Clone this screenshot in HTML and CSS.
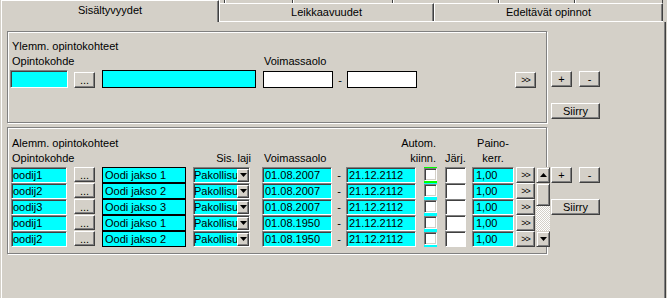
FILE: index.html
```html
<!DOCTYPE html>
<html lang="fi">
<head>
    <meta charset="UTF-8">
    <title>Sisältyvyydet</title>
    <link rel="stylesheet" href="styles.css">
</head>
<body>
    <div class="window">
        <div class="tabbar">
            <div class="tab tab-active">Sisältyvyydet</div>
            <div class="tab-rest">
                <div class="tab-back">
                    <span class="seg seg-a"></span>
                    <span class="seg seg-b"></span>
                    <span class="seg seg-c"></span>
                    <span class="seg seg-d"></span>
                    <span class="seg seg-e"></span>
                    <span class="seg seg-f"></span>
                </div>
                <div class="tab-front">
                    <div class="tab tab-leik">Leikkaavuudet</div>
                    <div class="tab tab-edel">Edeltävät opinnot</div>
                </div>
            </div>
        </div>

        <div class="panel">
            <!-- Ylemmät -->
            <div class="section">
                <div class="group group-upper">
                    <div class="upper-grid">
                        <div class="lbl up-title">Ylemm. opintokohteet</div>
                        <div class="lbl up-lbl-code">Opintokohde</div>
                        <div class="lbl up-lbl-voim">Voimassaolo</div>

                        <div class="fld sunken cyan up-code"></div>
                        <button class="btn btn-dots up-btn">...</button>
                        <div class="fld boxed cyan up-name"></div>
                        <div class="fld boxed white up-date"></div>
                        <div class="dash up-dash">-</div>
                        <div class="fld boxed white up-date"></div>
                        <button class="btn btn-more up-btn">&gt;&gt;</button>
                    </div>
                </div>
                <div class="side">
                    <div class="side-row">
                        <button class="btn btn-sq">+</button>
                        <button class="btn btn-sq">-</button>
                    </div>
                    <button class="btn btn-move">Siirry</button>
                </div>
            </div>

            <!-- Alemmat -->
            <div class="section">
                <div class="group group-lower">
                    <div class="lower-head">
                        <div class="lbl h-title">Alemm. opintokohteet</div>
                        <div class="lbl h-chk h-top">Autom.</div>
                        <div class="lbl h-paino h-top">Paino-</div>
                        <div class="lbl h-code">Opintokohde</div>
                        <div class="lbl h-laji">Sis. laji</div>
                        <div class="lbl h-voim">Voimassaolo</div>
                        <div class="lbl h-chk h-bottom">kiinn.</div>
                        <div class="lbl h-jarj">Järj.</div>
                        <div class="lbl h-paino h-bottom">kerr.</div>
                    </div>
                    <div class="lower-rows" id="rows">
                        <div class="scroll">
                            <div class="sb-btn">
                                <svg width="7" height="4" viewBox="0 0 7 4"><path d="M0 4h7L3.5 0z"/></svg>
                            </div>
                            <div class="sb-thumb"></div>
                            <div class="sb-track"></div>
                            <div class="sb-btn">
                                <svg width="7" height="4" viewBox="0 0 7 4"><path d="M0 0h7L3.5 4z"/></svg>
                            </div>
                        </div>
                    </div>
                </div>
                <div class="side">
                    <div class="side-row">
                        <button class="btn btn-sq">+</button>
                        <button class="btn btn-sq">-</button>
                    </div>
                    <button class="btn btn-move">Siirry</button>
                </div>
            </div>
        </div>
    </div>

    <script>
        const rivit = [
            ['oodij1', 'Oodi jakso 1', '01.08.2007'],
            ['oodij2', 'Oodi jakso 2', '01.08.2007'],
            ['oodij3', 'Oodi jakso 3', '01.08.2007'],
            ['oodij1', 'Oodi jakso 1', '01.08.1950'],
            ['oodij2', 'Oodi jakso 2', '01.08.1950']
        ];

        const rows = document.getElementById('rows');
        const arrowDown = '<svg width="7" height="4" viewBox="0 0 7 4"><path d="M0 0h7L3.5 4z"/></svg>';

        rivit.forEach(([koodi, nimi, alku], i) => {
            rows.insertAdjacentHTML('beforeend',
                '<div class="fld sunken cyan lo-code">' + koodi + '</div>' +
                '<button class="btn btn-dots lo-btn">...</button>' +
                '<div class="fld boxed cyan lo-name">' + nimi + '</div>' +
                '<div class="select sunken"><span class="select-text">Pakollisu</span>' +
                    '<span class="drop">' + arrowDown + '</span></div>' +
                '<div class="fld sunken cyan lo-date">' + alku + '</div>' +
                '<div class="dash">-</div>' +
                '<div class="fld sunken cyan lo-date">21.12.2112</div>' +
                '<div class="chk-cell' + (i === 0 ? ' focus' : '') + '"><div class="chk"></div></div>' +
                '<div class="fld sunken white lo-jarj"></div>' +
                '<div class="fld sunken cyan lo-paino">1,00</div>' +
                '<button class="btn btn-more lo-more">&gt;&gt;</button>'
            );
        });
    </script>
</body>
</html>
```

FILE: styles.css
```css
body {
    margin: 0;
    background-color: #d4d0c8;
    font-family: "Liberation Sans", Arial, sans-serif;
    font-size: 11px;
    color: #000;
}

.window {
    margin-left: 1px;
    width: 665px;
}

/* Tabs */

.tabbar {
    display: flex;
    height: 22px;
}

.tab {
    box-sizing: border-box;
    text-align: center;
    white-space: nowrap;
}

.tab-active {
    width: 218px;
    height: 22px;
    line-height: 19px;
    border-top: 1px solid #fff;
    border-left: 1px solid #fff;
    border-right: 1px solid #404040;
    box-shadow: inset -1px 0 #808080;
}

.tab-rest {
    width: 444px;
    height: 22px;
    box-sizing: border-box;
    border-bottom: 1px solid #fff;
}

.tab-back {
    display: flex;
    height: 3px;
}

.seg {
    box-sizing: border-box;
    height: 3px;
    border-left: 1px solid #fff;
    border-right: 1px solid #404040;
}

.seg-a { width: 6px; }
.seg-b { width: 68px; }
.seg-c { width: 100px; }
.seg-d { width: 106px; }
.seg-e { width: 76px; }
.seg-f { width: 88px; }

.tab-front {
    display: flex;
    height: 18px;
}

.tab-front .tab {
    height: 18px;
    line-height: 16px;
    border-top: 1px solid #fff;
    border-left: 1px solid #fff;
    border-right: 1px solid #404040;
    box-shadow: inset -1px 0 #808080;
}

.tab-leik { width: 215px; }
.tab-edel { width: 229px; }

/* Panel */

.panel {
    box-sizing: border-box;
    height: 276px;
    padding: 9px 0 0 5px;
    border-left: 1px solid #fff;
    border-right: 1px solid #404040;
    box-shadow: inset -1px 0 #808080;
}

.section {
    display: flex;
    align-items: flex-start;
    margin-bottom: 4px;
}

.group {
    box-sizing: border-box;
    width: 540px;
    border: 1px solid #808080;
    box-shadow: inset 1px 1px #fff, 1px 1px #fff;
}

.group-upper {
    height: 92px;
    padding: 7px 0 0 2px;
}

.group-lower {
    height: 127px;
    padding: 8px 0 0 3px;
}

.lbl {
    line-height: 14px;
    white-space: nowrap;
    padding-left: 2px;
}

/* Upper grid */

.upper-grid {
    display: grid;
    grid-template-columns: 64px 28px 161px 70px 14px 168px 21px;
    grid-template-rows: 15px 16px 18px;
    justify-items: start;
}

.upper-grid > .fld,
.upper-grid > .btn,
.upper-grid > .dash {
    grid-row: 3;
}

.up-title { grid-row: 1; grid-column: 1 / -1; }
.up-lbl-code { grid-row: 2; grid-column: 1; }
.up-lbl-voim { grid-row: 2; grid-column: 4; padding-left: 1px; }

.fld {
    box-sizing: border-box;
    line-height: 14px;
    padding-left: 1px;
    white-space: nowrap;
    overflow: hidden;
}

.cyan { background-color: #00ffff; }
.white { background-color: #fff; }

.sunken {
    border: 1px solid;
    border-color: #808080 #fff #fff #808080;
    box-shadow: inset 1px 1px #404040;
}

.boxed {
    border: 1px solid #000;
}

.up-code { width: 58px; height: 18px; }
.up-name { width: 154px; height: 18px; }
.up-date { width: 70px; height: 17px; align-self: end; }
.up-btn { align-self: end; height: 16px; }
.up-dash { align-self: end; }

.dash {
    width: 14px;
    text-align: center;
    line-height: 16px;
}

/* Buttons */

.btn {
    box-sizing: border-box;
    margin: 0;
    padding: 0;
    background-color: #d4d0c8;
    border: 1px solid;
    border-color: #fff #404040 #404040 #fff;
    box-shadow: inset -1px -1px #808080;
    font-family: "Liberation Sans", Arial, sans-serif;
    font-size: 11px;
    color: #000;
    line-height: 12px;
    cursor: pointer;
}

.btn-dots { width: 21px; }

.btn-more {
    width: 21px;
    font-size: 9px;
    letter-spacing: -1px;
}

.btn-sq {
    width: 21px;
    height: 16px;
}

.btn-move {
    width: 49px;
    height: 16px;
    margin-top: 16px;
}

.side {
    display: flex;
    flex-direction: column;
    margin-left: 4px;
    padding-top: 40px;
}

.side-row {
    display: flex;
    gap: 7px;
}

/* Lower grid */

.lower-head,
.lower-rows {
    display: grid;
    grid-template-columns: 63px 28px 91px 69px 70px 14px 78px 21px 27px 44px 20px 14px;
    justify-items: start;
}

.lower-head {
    grid-template-rows: 15px 16px;
}

.lower-rows {
    grid-template-rows: repeat(5, 16px);
    width: 539px;
}

.h-title { grid-row: 1; grid-column: 1 / 6; padding-left: 1px; }
.h-code { grid-row: 2; grid-column: 1 / 3; padding-left: 1px; }
.h-laji { grid-row: 2; grid-column: 4; width: 58px; text-align: right; padding: 0; }
.h-voim { grid-row: 2; grid-column: 5 / 7; padding-left: 2px; }
.h-chk { grid-column: 7 / 9; justify-self: stretch; text-align: right; padding: 0 9px 0 0; }
.h-jarj { grid-row: 2; grid-column: 9; padding-left: 0; }
.h-paino { grid-column: 10 / 12; width: 42px; text-align: center; padding: 0; }
.h-top { grid-row: 1; }
.h-bottom { grid-row: 2; }

.lo-code { width: 56px; height: 16px; }
.lo-btn { height: 15px; }
.lo-name { width: 84px; height: 16px; padding-left: 2px; }
.lo-date { width: 70px; height: 16px; padding-left: 2px; }
.lo-jarj { width: 21px; height: 16px; }
.lo-paino { width: 42px; height: 16px; padding-left: 3px; }
.lo-more { width: 19px; height: 16px; }

.select {
    box-sizing: border-box;
    display: flex;
    align-items: center;
    width: 57px;
    height: 16px;
    background-color: #00ffff;
}

.select-text {
    flex: 1;
    overflow: hidden;
    white-space: nowrap;
    line-height: 13px;
}

.drop {
    box-sizing: border-box;
    display: flex;
    align-items: center;
    justify-content: center;
    width: 12px;
    height: 13px;
    background-color: #d4d0c8;
    border: 1px solid;
    border-color: #fff #404040 #404040 #fff;
    box-shadow: inset -1px -1px #808080;
}

.chk-cell {
    width: 13px;
    height: 16px;
    background-color: #00ffff;
}

.chk-cell.focus {
    background-color: #00ff00;
}

.chk {
    box-sizing: border-box;
    width: 13px;
    height: 13px;
    margin-top: 1px;
    background-color: #fff;
    border: 1px solid;
    border-color: #808080 #fff #fff #808080;
    box-shadow: inset 1px 1px #404040, inset -1px -1px #d4d0c8;
}

/* Scrollbar */

.scroll {
    grid-column: 12;
    grid-row: 1 / span 5;
    display: flex;
    flex-direction: column;
    width: 14px;
    height: 80px;
}

.sb-btn,
.sb-thumb {
    box-sizing: border-box;
    background-color: #d4d0c8;
    border: 1px solid;
    border-color: #d4d0c8 #404040 #404040 #d4d0c8;
    box-shadow: inset 1px 1px #fff, inset -1px -1px #808080;
}

.sb-btn {
    display: flex;
    align-items: center;
    justify-content: center;
    height: 16px;
}

.sb-thumb {
    height: 23px;
}

.sb-track {
    height: 25px;
    background: repeating-conic-gradient(#fff 0 25%, #d4d0c8 0 50%) 0 0 / 2px 2px;
}
```
